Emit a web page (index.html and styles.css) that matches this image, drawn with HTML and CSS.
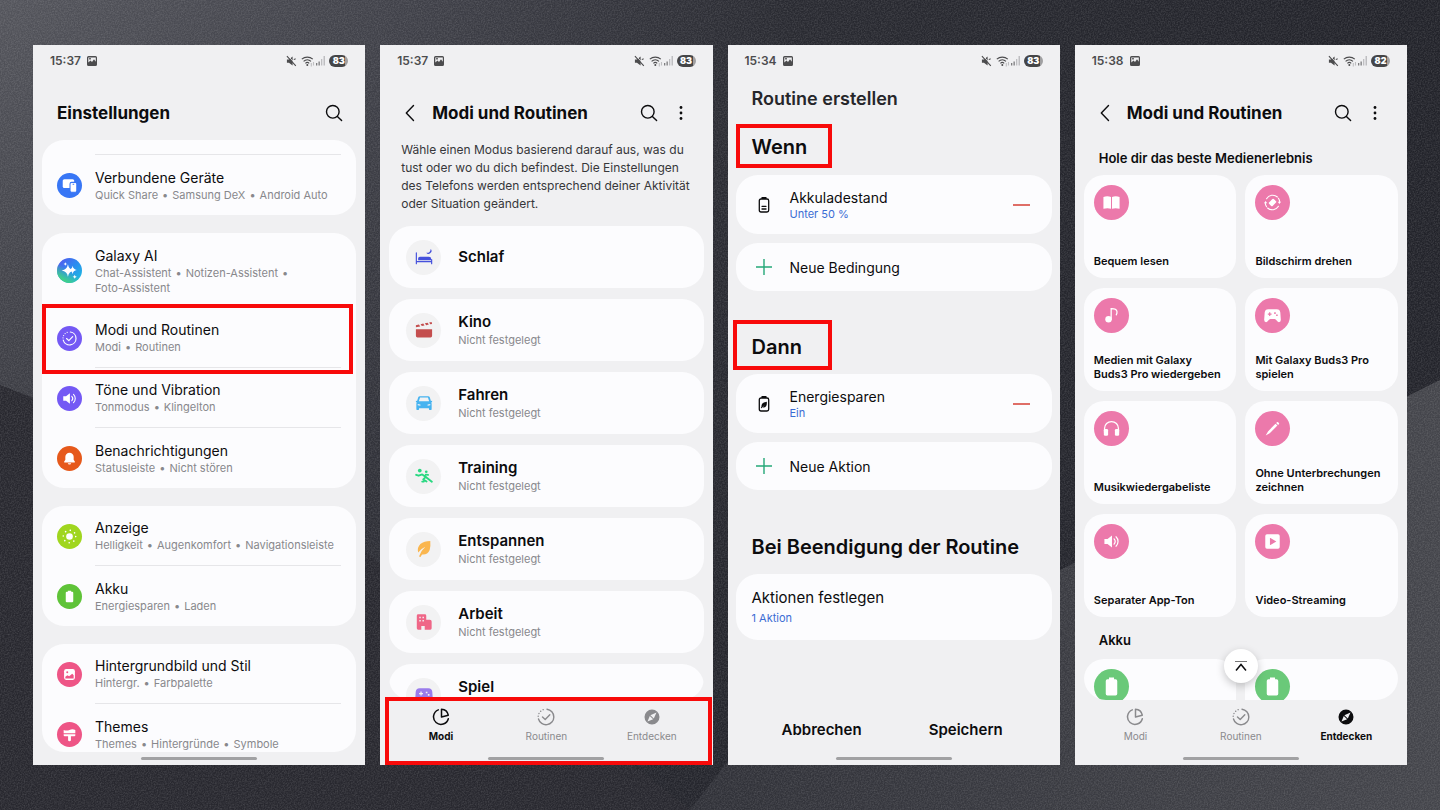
FILE: index.html
```
<!DOCTYPE html>
<html lang="de">
<head>
  <meta charset="UTF-8">
  <meta name="viewport" content="width=device-width, initial-scale=1">
  <title>Modi und Routinen</title>
  <link rel="stylesheet" href="styles.css">
</head>
<body>
  <!-- shared icons -->
  <svg class="defs" aria-hidden="true">
    <linearGradient id="ai-grad" x1="0" y1="0" x2="1" y2="1">
      <stop offset="0" stop-color="#5a50ee"/>
      <stop offset=".5" stop-color="#2a8cf0"/>
      <stop offset="1" stop-color="#1cc6dc"/>
    </linearGradient>
    <linearGradient id="ai-green" x1=".2" y1="1" x2=".6" y2=".4">
      <stop offset="0" stop-color="#3fd08a"/>
      <stop offset=".2" stop-color="#3fd08a"/>
      <stop offset=".8" stop-color="#3fd08a" stop-opacity="0"/>
    </linearGradient>
    <symbol id="photo" viewBox="0 0 12 12">
      <path fill-rule="evenodd" fill="currentColor" d="M2.5 1h7A1.5 1.5 0 0 1 11 2.500v7A1.500 1.500 0 0 1 9.500 11h-7A1.500 1.500 0 0 1 1 9.500v-7A1.500 1.500 0 0 1 2.500 1zM2.300 7.400 4.500 5.600 6 7l2-2.700 1.800 2.400V2.400H2.300zM3.200 3h1.600v1.600H3.200z"/>
    </symbol>
    <symbol id="mute" viewBox="0 0 12 12">
      <path fill="currentColor" d="M1 4.300h2.200L7.200 1v10L3.200 7.900H1z"/>
      <path stroke="#f0f0f2" stroke-width="1" d="M2 .2l9.500 10.400"/>
      <path fill="none" stroke="currentColor" stroke-width="1.200" d="M1 .8l9.700 10.600M8.500 4.500l2-1"/>
    </symbol>
    <symbol id="wifi" viewBox="0 0 14 12">
      <g fill="none" stroke="currentColor" stroke-width="1.100">
        <path d="M.8 4.200a8.200 8.200 0 0 1 11 0M2.600 6.300a5.400 5.400 0 0 1 7.400 0M4.400 8.300a2.800 2.800 0 0 1 3.800 0"/>
        <path opacity=".3" d="M10.300 8v3.500M12.500 7v3.500"/>
      </g>
      <circle cx="6.300" cy="10" r="1" fill="currentColor"/>
    </symbol>
    <symbol id="signal" viewBox="0 0 10 11">
      <path fill="currentColor" opacity=".7" d="M0 8h1.300v2.500H0zM2.500 6.500h1.300v4H2.500z"/>
      <path fill="currentColor" opacity=".3" d="M5 4h1.300v6.500H5zM7.500 1H9v9.500H7.500z"/>
    </symbol>
    <symbol id="search" viewBox="0 0 18 18">
      <g fill="none" stroke="currentColor" stroke-width="1.400" stroke-linecap="round">
        <circle cx="7.800" cy="7.800" r="6.300"/><path d="M12.400 12.400 16.600 16.600"/>
      </g>
    </symbol>
    <symbol id="back" viewBox="0 0 10 18">
      <path fill="none" stroke="currentColor" stroke-width="1.400" stroke-linecap="round" stroke-linejoin="round" d="M8.500 1.500 1.300 9l7.200 7.500"/>
    </symbol>
    <symbol id="more" viewBox="0 0 4 18">
      <g fill="currentColor"><circle cx="2" cy="3.500" r="1.400"/><circle cx="2" cy="9" r="1.400"/><circle cx="2" cy="14.500" r="1.400"/></g>
    </symbol>
    <symbol id="devices" viewBox="0 0 24 24">
      <rect x="5.500" y="6" width="11" height="8.500" rx="1.500" fill="#fff"/>
      <rect x="12.500" y="9" width="6.500" height="9.500" rx="1.500" fill="#fff" stroke="#3876f5"/>
      <path stroke="#3876f5" d="M15 10.800h1.500"/>
    </symbol>
    <symbol id="sparkle" viewBox="0 0 24 24">
      <path fill="#fff" d="M10.500 6q.8 5.200 6 6-5.200.8-6 6-.8-5.200-6-6 5.200-.8 6-6zM15 7.500q.5 3.500 4 4-3.500.5-4 4-.5-3.500-4-4 3.500-.5 4-4zM8 4q.3 1.400 1.700 1.700Q8.300 6 8 7.400 7.700 6 6.300 5.700 7.700 5.400 8 4zM17 16q.3 1.700 2 2-1.700.3-2 2-.3-1.700-2-2 1.700-.3 2-2z"/>
    </symbol>
    <symbol id="routine" viewBox="0 0 18 18">
      <g fill="none" stroke="currentColor" stroke-width="1.400" stroke-linecap="round" stroke-linejoin="round">
        <path d="M10 1.200A7.800 7.800 0 1 1 1.500 11M5.500 9l2.700 2.600 4.600-4.800"/>
        <path stroke-dasharray=".1 2.700" d="M1.200 8.200A7.800 7.800 0 0 1 8 1.200"/>
      </g>
    </symbol>
    <symbol id="sound" viewBox="0 0 18 18">
      <path fill="currentColor" d="M1.500 6.300h3.300L9.500 2.600v12.800l-4.700-3.700H1.500z"/>
      <path fill="none" stroke="currentColor" stroke-width="1.300" stroke-linecap="round" d="M11.700 6.300a4 4 0 0 1 0 5.400M13.800 4a7 7 0 0 1 0 10"/>
    </symbol>
    <symbol id="bell" viewBox="0 0 18 18">
      <path fill="currentColor" d="M9 2a5 5 0 0 1 5 5v3.500l1.500 2.300q.3.900-.6.900H3.100q-.9 0-.6-.9L4 10.500V7a5 5 0 0 1 5-5zM7 14.600h4a2 1.600 0 0 1-4 0z"/>
    </symbol>
    <symbol id="sun" viewBox="0 0 18 18">
      <circle cx="9" cy="9" r="3.500" fill="currentColor"/>
      <circle cx="9" cy="9" r="6.600" fill="none" stroke="currentColor" stroke-width="1.700" stroke-linecap="round" stroke-dasharray=".1 5.084"/>
    </symbol>
    <symbol id="battery" viewBox="0 0 18 18">
      <path fill="currentColor" d="M7 2h4v1.300h1.200q1.300 0 1.300 1.300v10.100q0 1.300-1.300 1.300H5.800q-1.300 0-1.300-1.300V4.600q0-1.300 1.300-1.300H7z"/>
    </symbol>
    <symbol id="wallpaper" viewBox="0 0 18 18">
      <rect x="2.500" y="2.500" width="13" height="13" rx="2.500" fill="currentColor"/>
      <circle cx="6.300" cy="6.300" r="1.200" fill="#ee5586"/>
      <path fill="#ee5586" d="M4 13.800v-2l2.500-2 2 1.300L12.300 8l1.700 2v3.800z"/>
    </symbol>
    <symbol id="brush" viewBox="0 0 18 18">
      <path fill="currentColor" d="M2 3.500q3.500 1.600 7 0t7 0V7.500H2zM2 8.700h14v1.200q0 1.300-1.300 1.300h-4v4.500q0 1.500-1.700 1.500t-1.700-1.500v-4.500h-4Q2 11.200 2 9.900z"/>
    </symbol>
    <symbol id="bed" viewBox="0 0 20 20">
      <path fill="none" stroke="currentColor" stroke-width="1.300" stroke-linecap="round" d="M1.500 5.500v12M1.500 15.200h17M18.500 13v4.500"/>
      <path fill="currentColor" d="M3.500 13.700v-2.200q0-1.800 2-1.800h10q2.500 0 2.500 2.500v1.500zM17.500 1a3.200 3.200 0 1 1-5 4.300q4.300.6 5-4.300z"/>
    </symbol>
    <symbol id="clapper" viewBox="0 0 20 20">
      <path fill="currentColor" d="M1 9.300h18v7.200q0 1.700-1.700 1.700H2.700Q1 18.200 1 16.500zM1 4.600l3.400-.7L5.800 6 1 7zM6.200 3.500l3-.6 1.400 2.100-3 .6zM11 2.500l3-.6L15.400 4l-3 .6zM15.700 1.600l2.800-.6.500 2.300-2 .4z"/>
    </symbol>
    <symbol id="car" viewBox="0 0 20 20">
      <path fill="currentColor" fill-rule="evenodd" d="M5.500 2.500h9q1.500 0 2 1.500l1.200 3.800 1.300-.3v1.500l-1 .5q.5.700.5 1.500v6q0 .8-.8.8h-1.400q-.8 0-.8-.8v-1.200h-11V17q0 .8-.8.800H2.300q-.8 0-.8-.8v-6q0-.8.500-1.500L1 9V7.500l1.300.3L3.500 4q.5-1.500 2-1.500zM5.600 4 4.300 8h11.400l-1.300-4zM3 11v1.500l3 .6v-1.300zM17 11v1.500l-3 .6v-1.300z"/>
    </symbol>
    <symbol id="train" viewBox="0 0 20 20">
      <g fill="currentColor"><circle cx="5.300" cy="4" r="2.100"/><circle cx="12.500" cy="5.300" r="1.500"/></g>
      <path fill="none" stroke="currentColor" stroke-width="2.100" stroke-linecap="round" stroke-linejoin="round" d="M1.300 8.700l2.700 1L8 8.300l4 2.700M12 11l-2.800 2.800 3.600 2.400M8 16.200H9.800M12 11l6.700 5.300M12 8.500l2.500.2"/>
    </symbol>
    <symbol id="leaf" viewBox="0 0 20 20">
      <path fill="currentColor" d="M17 1Q10 1 6 4.500 2 8.500 3.500 14 6 10 11.500 7.500 7 11.500 4.800 17.500q-.3 1.500.7 1.500T7 17.500Q7.300 16.500 8 16q6 .5 8.300-5Q17.500 7 17 1z"/>
    </symbol>
    <symbol id="office" viewBox="0 0 20 20">
      <path fill="currentColor" fill-rule="evenodd" d="M3.500 1.500h7.500q1.500 0 1.500 1.500V7.500h4q2 0 2 2v7.500q0 1.500-1.500 1.500h-6.200v-4H7v4H3.500Q2 18.500 2 17V3q0-1.500 1.500-1.500zM4.800 4.200v1.600h1.600V4.200zM8.300 4.200v1.600h1.600V4.200zM4.800 7.900v1.600h1.600V7.900zM8.300 7.900v1.600h1.600V7.900z"/>
    </symbol>
    <symbol id="gamepad" viewBox="0 0 20 20">
      <path fill="currentColor" fill-rule="evenodd" d="M5 2.500h10q3.800 0 4.200 4l.6 8.500q0 2.800-2.200 2.800-1.300 0-2.200-1.300-1.600-2.300-3-2.300H7.600q-1.400 0-3 2.300-.9 1.300-2.200 1.300-2.200 0-2.200-2.800L.8 6.500q.4-4 4.200-4zM6 6.200v1.500H4.500v1.400H6v1.500h1.400V9.100h1.500V7.700H7.400V6.200zM12 6.300v1.800h1.800V6.300zM14.300 8.900v1.800h1.800V8.900z"/>
    </symbol>
    <symbol id="modes" viewBox="0 0 18 18">
      <g fill="none" stroke="currentColor" stroke-width="1.500" stroke-linejoin="round" stroke-linecap="round">
        <path d="M6.300 1.900a7.500 7.500 0 1 0 10 8.800"/><path d="M9.500 1.200a7.300 7.300 0 0 1 6.800 6L9.500 9z"/>
      </g>
    </symbol>
    <symbol id="compass" viewBox="0 0 18 18">
      <path fill="currentColor" fill-rule="evenodd" d="M9 1.500a7.500 7.500 0 1 1 0 15 7.500 7.500 0 0 1 0-15zM13.500 4.500 7.400 7.200l3.400 3.400zM6.800 7.900l-2.300 5.600 5.600-2.300z"/>
    </symbol>
    <symbol id="batt-line" viewBox="0 0 18 18">
      <path fill="none" stroke="currentColor" stroke-width="1.300" stroke-linecap="round" d="M6 3h6q1.700 0 1.700 1.700v9.600q0 1.700-1.700 1.700H6q-1.700 0-1.700-1.700V4.700Q4.300 3 6 3zM7 1.700h4M7 10.300h4M7 13h4"/>
    </symbol>
    <symbol id="batt-leaf" viewBox="0 0 18 18">
      <path fill="none" stroke="currentColor" stroke-width="1.300" stroke-linecap="round" d="M6 3h6q1.700 0 1.700 1.700v9.600q0 1.700-1.700 1.700H6q-1.700 0-1.700-1.700V4.700Q4.300 3 6 3zM7 1.700h4"/>
      <path fill="currentColor" d="M11.800 6.800q.5 5.600-3.300 5.700h-.8l2.300-3-3.400 3.700-.8-.3.700-1.500Q6 7.500 11.800 6.800z"/>
    </symbol>
    <symbol id="plus" viewBox="0 0 18 18"><path stroke="currentColor" stroke-width="1.400" d="M1 9h16M9 1v16"/></symbol>
    <symbol id="minus" viewBox="0 0 18 18"><path stroke="currentColor" stroke-width="1.600" d="M1 9h17"/></symbol>
    <symbol id="book" viewBox="0 0 20 20">
      <path fill="currentColor" d="M.5 3.500q4.500-1.500 8.900 0v13.800q-4-1.300-8.900 0zM10.600 3.500q4.400-1.500 8.900 0v13.800q-4.900-1.300-8.900 0z"/>
    </symbol>
    <symbol id="rotate" viewBox="0 0 20 20">
      <rect x="7" y="6" width="6" height="8" rx="1.200" transform="rotate(45 10 10)" fill="currentColor"/>
      <path fill="none" stroke="currentColor" stroke-width="1.300" stroke-linecap="round" d="M3 5.500a8.500 8.500 0 0 1 12.800-2M17 5a8 8 0 0 1 1.500 4.500M17 14.500a8.500 8.500 0 0 1-12.800 2M3 15a8 8 0 0 1-1.500-4.500"/>
      <path fill="currentColor" d="M16.200 9h3.800l-1.900 2.900zM0 11h3.800L1.900 8.100z"/>
    </symbol>
    <symbol id="note" viewBox="0 0 20 20">
      <circle cx="6.500" cy="14.500" r="3.800" fill="currentColor"/>
      <path fill="none" stroke="currentColor" stroke-width="1.500" stroke-linecap="round" d="M9.600 14.500V2q6-.2 6.800 3.200.4 2-.8 4"/>
    </symbol>
    <symbol id="headphones" viewBox="0 0 20 20">
      <path fill="none" stroke="currentColor" stroke-width="1.500" d="M1.800 15v-5a8.200 8.200 0 0 1 16.400 0v5"/>
      <rect x="1" y="10.500" width="5" height="8" rx="1.500" fill="currentColor"/>
      <rect x="14" y="10.500" width="5" height="8" rx="1.500" fill="currentColor"/>
    </symbol>
    <symbol id="pencil" viewBox="0 0 20 20">
      <path fill="currentColor" d="M13.500 4.300l2.300 2.300L6.700 15.500 2 18.300l2.700-4.900zM14.300 3.500l.9-.9q.7-.7 1.400 0l.9.900q.7.700 0 1.400l-.9.900z"/>
    </symbol>
    <symbol id="video" viewBox="0 0 20 20">
      <path fill="currentColor" fill-rule="evenodd" d="M3.500 1.500h13q2 0 2 2v13q0 2-2 2h-13q-2 0-2-2v-13q0-2 2-2zM7 5.500v9l7.500-4.500z"/>
    </symbol>
    <symbol id="totop" viewBox="0 0 16 16">
      <path stroke="#777" stroke-width="1" d="M2 3.500h12"/>
      <path fill="none" stroke="currentColor" stroke-width="1.500" d="M3 12.500 8 6.500l5 6"/>
    </symbol>
  </svg>

  <!-- textured backdrop -->
  <svg class="backdrop" viewBox="0 0 1440 810" preserveAspectRatio="none" aria-hidden="true">
    <defs>
      <linearGradient id="bg-top" x1="0" y1="0" x2="1" y2="0">
        <stop offset="0" stop-color="#54555c"/>
        <stop offset=".3" stop-color="#3f4048"/>
        <stop offset=".55" stop-color="#292a31"/>
        <stop offset="1" stop-color="#22232a"/>
      </linearGradient>
      <linearGradient id="bg-fade" x1="0" y1="0" x2="0" y2="1">
        <stop offset="0" stop-color="#24252c" stop-opacity="0"/>
        <stop offset="1" stop-color="#24252c"/>
      </linearGradient>
      <linearGradient id="bg-low" x1="0" y1="0" x2="1" y2="0">
        <stop offset="0" stop-color="#303138"/>
        <stop offset="1" stop-color="#44454b"/>
      </linearGradient>
      <filter id="grain">
        <feTurbulence type="fractalNoise" baseFrequency=".7" numOctaves="2"/>
        <feColorMatrix values="0 0 0 0 1  0 0 0 0 1  0 0 0 0 1  .6 0 0 0 -.2"/>
      </filter>
    </defs>
    <rect width="1440" height="810" fill="url(#bg-top)"/>
    <rect width="1440" height="810" fill="url(#bg-fade)"/>
    <path fill="#28282f" d="M0 385 300 500 690 810H0z"/>
    <path fill="url(#bg-low)" d="M690 810 760 720 1440 380V810z"/>
    <rect width="1440" height="810" filter="url(#grain)" opacity=".4"/>
  </svg>

  <main class="phones">
    <!-- Einstellungen -->
    <section class="phone">
      <div class="status"><span>15:37</span><svg class="s-photo"><use href="#photo"/></svg>
        <svg class="s-mute"><use href="#mute"/></svg><svg class="s-wifi"><use href="#wifi"/></svg><svg class="s-signal"><use href="#signal"/></svg><b class="charge">83</b></div>
      <header class="appbar wide">
        <h1>Einstellungen</h1>
        <button aria-label="Suchen"><svg class="i18"><use href="#search"/></svg></button>
      </header>
      <div class="settings">
        <div class="group first">
          <a class="row" href="#"><span class="dot blue"><svg><use href="#devices"/></svg></span>
            <div class="label"><h2>Verbundene Geräte</h2><ul><li>Quick Share</li><li>Samsung DeX</li><li>Android Auto</li></ul></div></a>
        </div>
        <div class="group">
          <a class="row ai-row" href="#"><svg class="ai" viewBox="0 0 24 24"><circle cx="12" cy="12" r="12" fill="url(#ai-grad)"/><circle cx="12" cy="12" r="12" fill="url(#ai-green)"/><use href="#sparkle"/></svg>
            <div class="label"><h2>Galaxy AI</h2><ul><li>Chat-Assistent</li><li>Notizen-Assistent</li><li>Foto-Assistent</li></ul></div></a>
          <a class="row marked" href="#"><span class="dot violet"><svg class="i15"><use href="#routine"/></svg></span>
            <div class="label line"><h2>Modi und Routinen</h2><ul><li>Modi</li><li>Routinen</li></ul></div></a>
          <a class="row" href="#"><span class="dot violet"><svg class="i15"><use href="#sound"/></svg></span>
            <div class="label line"><h2>Töne und Vibration</h2><ul><li>Tonmodus</li><li>Klingelton</li></ul></div></a>
          <a class="row" href="#"><span class="dot orange"><svg class="i15"><use href="#bell"/></svg></span>
            <div class="label"><h2>Benachrichtigungen</h2><ul><li>Statusleiste</li><li>Nicht stören</li></ul></div></a>
        </div>
        <div class="group">
          <a class="row" href="#"><span class="dot lime"><svg class="i17"><use href="#sun"/></svg></span>
            <div class="label line"><h2>Anzeige</h2><ul><li>Helligkeit</li><li>Augenkomfort</li><li>Navigationsleiste</li></ul></div></a>
          <a class="row" href="#"><span class="dot green"><svg class="i15"><use href="#battery"/></svg></span>
            <div class="label"><h2>Akku</h2><ul><li>Energiesparen</li><li>Laden</li></ul></div></a>
        </div>
        <div class="group">
          <a class="row" href="#"><span class="dot pink"><svg class="i15"><use href="#wallpaper"/></svg></span>
            <div class="label line"><h2>Hintergrundbild und Stil</h2><ul><li>Hintergr.</li><li>Farbpalette</li></ul></div></a>
          <a class="row" href="#"><span class="dot pink"><svg class="i15"><use href="#brush"/></svg></span>
            <div class="label"><h2>Themes</h2><ul><li>Themes</li><li>Hintergründe</li><li>Symbole</li></ul></div></a>
        </div>
      </div>
      <div class="homebar"></div>
    </section>

    <!-- Modi -->
    <section class="phone">
      <div class="status"><span>15:37</span><svg class="s-photo"><use href="#photo"/></svg>
        <svg class="s-mute"><use href="#mute"/></svg><svg class="s-wifi"><use href="#wifi"/></svg><svg class="s-signal"><use href="#signal"/></svg><b class="charge">83</b></div>
      <header class="appbar">
        <button aria-label="Zurück"><svg class="i-back"><use href="#back"/></svg></button>
        <h1>Modi und Routinen</h1>
        <button aria-label="Suchen"><svg class="i18"><use href="#search"/></svg></button>
        <button aria-label="Mehr"><svg class="i-more"><use href="#more"/></svg></button>
      </header>
      <p class="intro">Wähle einen Modus basierend darauf aus, was du tust oder wo du dich befindest. Die Einstellungen des Telefons werden entsprechend deiner Aktivität oder Situation geändert.</p>
      <div class="modes">
        <a class="mode" href="#"><span class="round sleep"><svg><use href="#bed"/></svg></span><div><h2>Schlaf</h2></div></a>
        <a class="mode" href="#"><span class="round cinema"><svg><use href="#clapper"/></svg></span><div><h2>Kino</h2><p>Nicht festgelegt</p></div></a>
        <a class="mode" href="#"><span class="round drive"><svg><use href="#car"/></svg></span><div><h2>Fahren</h2><p>Nicht festgelegt</p></div></a>
        <a class="mode" href="#"><span class="round sport"><svg><use href="#train"/></svg></span><div><h2>Training</h2><p>Nicht festgelegt</p></div></a>
        <a class="mode" href="#"><span class="round relax"><svg><use href="#leaf"/></svg></span><div><h2>Entspannen</h2><p>Nicht festgelegt</p></div></a>
        <a class="mode" href="#"><span class="round work"><svg><use href="#office"/></svg></span><div><h2>Arbeit</h2><p>Nicht festgelegt</p></div></a>
        <a class="mode last" href="#"><span class="round game"><svg><use href="#gamepad"/></svg></span><div><h2>Spiel</h2></div></a>
      </div>
      <div class="bottom marked-nav">
        <nav class="tabs">
          <a class="active" href="#"><svg><use href="#modes"/></svg>Modi</a>
          <a href="#"><svg><use href="#routine"/></svg>Routinen</a>
          <a href="#"><svg><use href="#compass"/></svg>Entdecken</a>
        </nav>
        <div class="homebar"></div>
      </div>
    </section>

    <!-- Routine erstellen -->
    <section class="phone">
      <div class="status"><span>15:34</span><svg class="s-photo"><use href="#photo"/></svg>
        <svg class="s-mute"><use href="#mute"/></svg><svg class="s-wifi"><use href="#wifi"/></svg><svg class="s-signal"><use href="#signal"/></svg><b class="charge">83</b></div>
      <h1 class="create-title">Routine erstellen</h1>
      <div class="create">
        <h2 class="boxed">Wenn</h2>
        <div class="item"><svg class="i18"><use href="#batt-line"/></svg><div><h3>Akkuladestand</h3><p>Unter 50 %</p></div><button class="remove" aria-label="Akkuladestand entfernen"><svg class="i18"><use href="#minus"/></svg></button></div>
        <button class="item add"><svg class="i18"><use href="#plus"/></svg>Neue Bedingung</button>
        <h2 class="boxed then">Dann</h2>
        <div class="item"><svg class="i18"><use href="#batt-leaf"/></svg><div><h3>Energiesparen</h3><p>Ein</p></div><button class="remove" aria-label="Energiesparen entfernen"><svg class="i18"><use href="#minus"/></svg></button></div>
        <button class="item add"><svg class="i18"><use href="#plus"/></svg>Neue Aktion</button>
        <h2 class="end">Bei Beendigung der Routine</h2>
        <a class="item finish" href="#"><div><h3>Aktionen festlegen</h3><p>1 Aktion</p></div></a>
      </div>
      <div class="actions"><button>Abbrechen</button><button>Speichern</button></div>
      <div class="homebar"></div>
    </section>

    <!-- Entdecken -->
    <section class="phone">
      <div class="status"><span>15:38</span><svg class="s-photo"><use href="#photo"/></svg>
        <svg class="s-mute"><use href="#mute"/></svg><svg class="s-wifi"><use href="#wifi"/></svg><svg class="s-signal"><use href="#signal"/></svg><b class="charge">82</b></div>
      <header class="appbar">
        <button aria-label="Zurück"><svg class="i-back"><use href="#back"/></svg></button>
        <h1>Modi und Routinen</h1>
        <button aria-label="Suchen"><svg class="i18"><use href="#search"/></svg></button>
        <button aria-label="Mehr"><svg class="i-more"><use href="#more"/></svg></button>
      </header>
      <div class="discover">
        <h2>Hole dir das beste Medienerlebnis</h2>
        <div class="tiles">
          <a class="tile" href="#"><span class="round"><svg><use href="#book"/></svg></span>Bequem lesen</a>
          <a class="tile" href="#"><span class="round"><svg><use href="#rotate"/></svg></span>Bildschirm drehen</a>
          <a class="tile" href="#"><span class="round"><svg><use href="#note"/></svg></span>Medien mit Galaxy Buds3 Pro wiedergeben</a>
          <a class="tile" href="#"><span class="round"><svg><use href="#gamepad"/></svg></span>Mit Galaxy Buds3 Pro spielen</a>
          <a class="tile" href="#"><span class="round"><svg><use href="#headphones"/></svg></span>Musikwiedergabeliste</a>
          <a class="tile" href="#"><span class="round"><svg><use href="#pencil"/></svg></span>Ohne Unterbrechungen zeichnen</a>
          <a class="tile" href="#"><span class="round"><svg><use href="#sound"/></svg></span>Separater App-Ton</a>
          <a class="tile" href="#"><span class="round"><svg><use href="#video"/></svg></span>Video-Streaming</a>
        </div>
        <h2 class="second">Akku</h2>
        <div class="tiles power">
          <a class="tile" href="#" aria-label="Akku"><span class="round"><svg><use href="#battery"/></svg></span></a>
          <a class="tile" href="#" aria-label="Akku"><span class="round"><svg><use href="#battery"/></svg></span></a>
        </div>
      </div>
      <div class="bottom">
        <button class="totop" aria-label="Nach oben"><svg><use href="#totop"/></svg></button>
        <nav class="tabs">
          <a href="#"><svg><use href="#modes"/></svg>Modi</a>
          <a href="#"><svg><use href="#routine"/></svg>Routinen</a>
          <a class="active" href="#"><svg><use href="#compass"/></svg>Entdecken</a>
        </nav>
        <div class="homebar"></div>
      </div>
    </section>
  </main>
</body>
</html>
```
FILE: styles.css
```
* {
  box-sizing: border-box;
}

body {
  margin: 0;
  height: 100vh;
  overflow: hidden;
  background: #2b2c34;
  font-family: Inter, Roboto, sans-serif;
  color: #0c0c0e;
}

h1, h2, h3, p, ul {
  margin: 0;
  padding: 0;
}

a {
  color: inherit;
  text-decoration: none;
}

button {
  padding: 0;
  border: none;
  background: none;
  color: inherit;
  font-family: inherit;
  cursor: pointer;
}

svg {
  display: block;
  flex: none;
}

.defs {
  position: absolute;
  width: 0;
  height: 0;
}

.backdrop {
  position: absolute;
  inset: 0;
  width: 100%;
  height: 100%;
}

.i15 { width: 15px; height: 15px; }
.i17 { width: 17px; height: 17px; }
.i18 { width: 18px; height: 18px; }
.i-back { width: 10px; height: 18px; }
.i-more { width: 4px; height: 18px; }

.phones {
  position: relative;
  display: grid;
  grid-template-columns: repeat(4, 1fr);
  gap: 15px;
  height: 100%;
  padding: 45px 33px;
}

.phone {
  display: flex;
  flex-direction: column;
  min-width: 0;
  min-height: 0;
  background: #f0f0f2;
}

/* status bar */
.status {
  display: flex;
  flex: none;
  align-items: center;
  height: 31px;
  padding: 0 17px;
  color: #4c4c4e;
  font-size: 12px;
  font-weight: 600;
}

.s-photo { width: 12px; height: 12px; margin-left: 5px; }
.s-mute { width: 11px; height: 12px; margin-left: auto; }
.s-wifi { width: 14px; height: 12px; margin-left: 4px; }
.s-signal { width: 10px; height: 11px; margin-left: 1px; }

.charge {
  width: 19px;
  margin-left: 3px;
  border-radius: 6px;
  background: linear-gradient(90deg, #454547 83%, #a0a0a2 83%);
  color: #fff;
  font-size: 9px;
  line-height: 12px;
  text-align: center;
}

/* title bar */
.appbar {
  display: flex;
  flex: none;
  align-items: center;
  gap: 21px;
  height: 74px;
  padding: 0 30px 0 25px;
}

.appbar.wide {
  height: 64px;
  padding: 10px 22px 0 24px;
}

.appbar h1 {
  flex: 1;
  margin-right: -5px;
  font-size: 17px;
  line-height: 24px;
  font-weight: 700;
  white-space: nowrap;
}

.appbar button:first-child {
  margin-right: -4px;
}

/* settings list */
.settings {
  display: flex;
  flex: 1;
  flex-direction: column;
  gap: 18px;
  min-height: 0;
  margin: 0 9px;
  overflow: hidden;
  border-radius: 0 0 22px 22px;
}

.group {
  flex: none;
  border-radius: 22px;
  background: #fcfcfe;
}

.group.first::before {
  content: "";
  display: block;
  height: 14px;
  margin: 0 15px 0 53px;
  border-bottom: 1px solid #e6e6e9;
}

.row {
  position: relative;
  display: flex;
  align-items: center;
  gap: 13px;
  height: 60px;
  padding: 0 15px;
}

.ai-row {
  height: 75px;
}

.dot {
  display: flex;
  flex: none;
  align-items: center;
  justify-content: center;
  width: 25px;
  height: 25px;
  border-radius: 50%;
  color: #fff;
}

.dot svg:not([class]),
.ai {
  width: 25px;
  height: 25px;
}

.blue { background: #3876f5; }
.violet { background: #7459f4; }
.orange { background: #e6591b; }
.lime { background: #a0d61f; }
.green { background: #5fc338; }
.pink { background: #ee5586; }

.label {
  display: flex;
  flex: 1;
  flex-direction: column;
  justify-content: center;
  height: 100%;
  min-width: 0;
}

.line {
  border-bottom: 1px solid #e6e6e9;
}

.label h2 {
  font-size: 14px;
  line-height: 20px;
  font-weight: 400;
}

.label ul {
  display: flex;
  flex-wrap: wrap;
  color: #88888c;
  font-size: 11px;
  line-height: 15px;
  list-style: none;
}

.label li {
  white-space: nowrap;
}

.label li:not(:last-child)::after {
  content: "•";
  margin: 0 4px;
}

/* red highlight frames */
.marked::after,
.marked-nav::after,
.boxed::after {
  content: "";
  position: absolute;
  z-index: 1;
  inset: -4px 3px -6px 0;
  border: 4px solid #f80a0a;
  pointer-events: none;
}

.marked-nav::after {
  inset: -3px 1px 0 5px;
}

.homebar {
  flex: none;
  width: 116px;
  height: 3px;
  margin: 5px auto;
  border-radius: 2px;
  background: #a1a1a3;
}

/* modes */
.intro {
  flex: none;
  margin: -9px 21px 13px;
  color: #37373a;
  font-size: 12px;
  line-height: 18px;
}

.modes {
  display: flex;
  flex: 1;
  flex-direction: column;
  gap: 11px;
  min-height: 0;
  margin: 0 9px;
  overflow: hidden;
  border-radius: 0 0 22px 22px;
}

.mode {
  display: flex;
  flex: none;
  align-items: center;
  gap: 17px;
  height: 62px;
  padding: 0 17px;
  border-radius: 22px;
  background: #fcfcfe;
}

.mode h2 {
  font-size: 15px;
  line-height: 20px;
  font-weight: 600;
}

.mode p {
  color: #88888c;
  font-size: 11px;
  line-height: 16px;
}

.mode.last h2 {
  margin-bottom: 16px;
}

.round {
  display: flex;
  flex: none;
  align-items: center;
  justify-content: center;
  width: 35px;
  height: 35px;
  border-radius: 50%;
  background: #f2f2f3;
}

.round svg {
  width: 18px;
  height: 18px;
}

.sleep { color: #4551dc; }
.cinema { color: #c44e4e; }
.drive { color: #46b3f0; }
.sport { color: #28d880; }
.relax { color: #fab64f; }
.work { color: #ef6687; }
.game { color: #9a7cec; }

/* bottom tabs */
.bottom {
  position: relative;
  flex: none;
}

.tabs {
  display: flex;
  height: 52px;
  padding: 0 8px;
}

.tabs a {
  display: flex;
  flex: 1;
  flex-direction: column;
  align-items: center;
  gap: 3px;
  padding-top: 8px;
  color: #8a8a8d;
  font-size: 10px;
  line-height: 15px;
}

.tabs svg {
  width: 18px;
  height: 18px;
}

.tabs .active {
  color: #0c0c0e;
  font-weight: 700;
}

.totop {
  position: absolute;
  top: -51px;
  left: calc(50% - 17px);
  display: flex;
  align-items: center;
  justify-content: center;
  width: 34px;
  height: 34px;
  border-radius: 50%;
  background: #fff;
  box-shadow: 0 3px 8px rgba(0, 0, 0, 0.22);
}

.totop svg {
  width: 16px;
  height: 16px;
}

/* create routine */
.create-title {
  padding: 11px 24px 0;
  color: #26262a;
  font-size: 18px;
  line-height: 24px;
  font-weight: 600;
}

.create {
  display: flex;
  flex: 1;
  flex-direction: column;
  min-height: 0;
  padding: 13px 8px 0;
}

.create h2 {
  font-size: 20px;
  line-height: 28px;
  font-weight: 600;
}

.create .boxed {
  position: relative;
  align-self: flex-start;
  width: 96px;
  padding: 9px 16px 14px;
}

.boxed::after {
  inset: 0 0 7px 0;
}

.create .then {
  margin-top: 29px;
  padding: 13px 16px 13px;
}

.then::after {
  inset: 0 0 4px -3px;
}

.create .end {
  margin-top: 43px;
  padding: 0 16px 13px;
}

.item {
  display: flex;
  align-items: center;
  gap: 17px;
  min-height: 59px;
  padding: 0 22px 0 19px;
  border-radius: 22px;
  background: #fcfcfe;
  text-align: left;
}

.item > div {
  flex: 1;
}

.item h3 {
  font-size: 14px;
  line-height: 19px;
  font-weight: 400;
}

.item p {
  color: #3b6cd4;
  font-size: 11px;
  line-height: 15px;
}

.add {
  min-height: 48px;
  margin-top: 9px;
  font-size: 14px;
}

.add svg {
  color: #25a878;
}

.remove {
  color: #d84a42;
}

.finish {
  min-height: 66px;
  padding: 0 16px;
}

.item.finish h3 {
  font-size: 15px;
}

.finish p {
  margin-top: 4px;
}

.actions {
  display: flex;
  gap: 20px;
  justify-content: center;
  padding: 0 32px 10px;
}

.actions button {
  flex: 1;
  font-size: 15px;
  line-height: 24px;
  font-weight: 600;
}

/* discover */
.discover {
  flex: 1;
  min-height: 0;
  margin: 0 9px;
  overflow: hidden;
  border-radius: 0 0 22px 22px;
}

.discover h2 {
  padding: 0 15px 9px;
  font-size: 13px;
  line-height: 16px;
  font-weight: 600;
}

.discover .second {
  padding: 15px 15px 11px;
}

.tiles {
  display: grid;
  grid-template-columns: 1fr 1fr;
  gap: 10px 9px;
}

.tile {
  display: flex;
  flex-direction: column;
  justify-content: space-between;
  height: 103px;
  padding: 10px 9px 10px 10px;
  border-radius: 20px;
  background: #fcfcfe;
  font-size: 11px;
  line-height: 14px;
  font-weight: 600;
}

.tile .round {
  background: #ec79ab;
  color: #fff;
}

.tile.tile .round svg {
  width: 17px;
  height: 17px;
}

.power .round {
  background: #6ac979;
}

.power .tile .round svg {
  width: 23px;
  height: 23px;
}
```
